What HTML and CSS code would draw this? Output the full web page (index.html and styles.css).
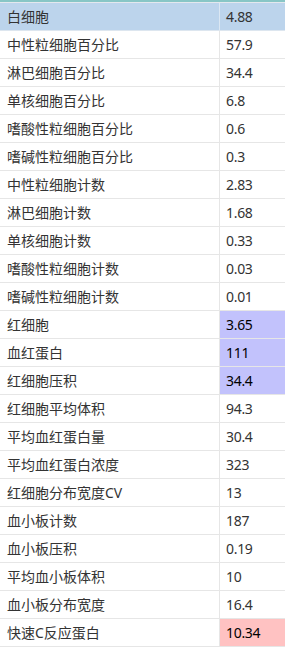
FILE: index.html
```html
<!DOCTYPE html>
<html lang="zh-CN">
<head>
<meta charset="utf-8">
<title>血常规</title>
<link rel="stylesheet" href="styles.css">
</head>
<body>
<div class="sheet">
  <div class="row selected"><div class="name">白细胞</div><div class="val">4.88</div></div>
  <div class="row"><div class="name">中性粒细胞百分比</div><div class="val">57.9</div></div>
  <div class="row"><div class="name">淋巴细胞百分比</div><div class="val">34.4</div></div>
  <div class="row"><div class="name">单核细胞百分比</div><div class="val">6.8</div></div>
  <div class="row"><div class="name">嗜酸性粒细胞百分比</div><div class="val">0.6</div></div>
  <div class="row"><div class="name">嗜碱性粒细胞百分比</div><div class="val">0.3</div></div>
  <div class="row"><div class="name">中性粒细胞计数</div><div class="val">2.83</div></div>
  <div class="row"><div class="name">淋巴细胞计数</div><div class="val">1.68</div></div>
  <div class="row"><div class="name">单核细胞计数</div><div class="val">0.33</div></div>
  <div class="row"><div class="name">嗜酸性粒细胞计数</div><div class="val">0.03</div></div>
  <div class="row"><div class="name">嗜碱性粒细胞计数</div><div class="val">0.01</div></div>
  <div class="row"><div class="name">红细胞</div><div class="val low">3.65</div></div>
  <div class="row"><div class="name">血红蛋白</div><div class="val low">111</div></div>
  <div class="row"><div class="name">红细胞压积</div><div class="val low">34.4</div></div>
  <div class="row"><div class="name">红细胞平均体积</div><div class="val">94.3</div></div>
  <div class="row"><div class="name">平均血红蛋白量</div><div class="val">30.4</div></div>
  <div class="row"><div class="name">平均血红蛋白浓度</div><div class="val">323</div></div>
  <div class="row"><div class="name">红细胞分布宽度CV</div><div class="val">13</div></div>
  <div class="row"><div class="name">血小板计数</div><div class="val">187</div></div>
  <div class="row"><div class="name">血小板压积</div><div class="val">0.19</div></div>
  <div class="row"><div class="name">平均血小板体积</div><div class="val">10</div></div>
  <div class="row"><div class="name">血小板分布宽度</div><div class="val">16.4</div></div>
  <div class="row"><div class="name">快速C反应蛋白</div><div class="val high">10.34</div></div>
</div>
</body>
</html>
```

FILE: styles.css
```css
html, body {
  margin: 0;
  padding: 0;
  background: #ffffff;
}

.sheet {
  width: 285px;
  border-top: 2px solid #88c6c6;
  font-family: "Noto Sans", "Noto Sans CJK SC", sans-serif;
  font-size: 14px;
  color: #333333;
}

.sheet::before {
  content: "";
  display: block;
  height: 1px;
  background: #e4e8ee;
}

.row {
  display: grid;
  grid-template-columns: 220px 1fr;
  height: 28px;
  box-sizing: border-box;
  border-bottom: 1px solid #e6e6e6;
}

.name,
.val {
  display: flex;
  align-items: center;
  line-height: 1;
}

.name {
  padding-left: 7px;
  border-right: 1px solid #e6e6e6;
}

.val {
  padding-left: 6px;
  letter-spacing: -0.3px;
}

.selected {
  background: #bcd4ec;
  border-bottom-color: #dde6ef;
}

.selected .name {
  border-right-color: #dbe7f3;
}

.low {
  background: #c2c2fc;
  color: #000000;
}

.high {
  background: #ffc2c2;
  color: #000000;
}
```
